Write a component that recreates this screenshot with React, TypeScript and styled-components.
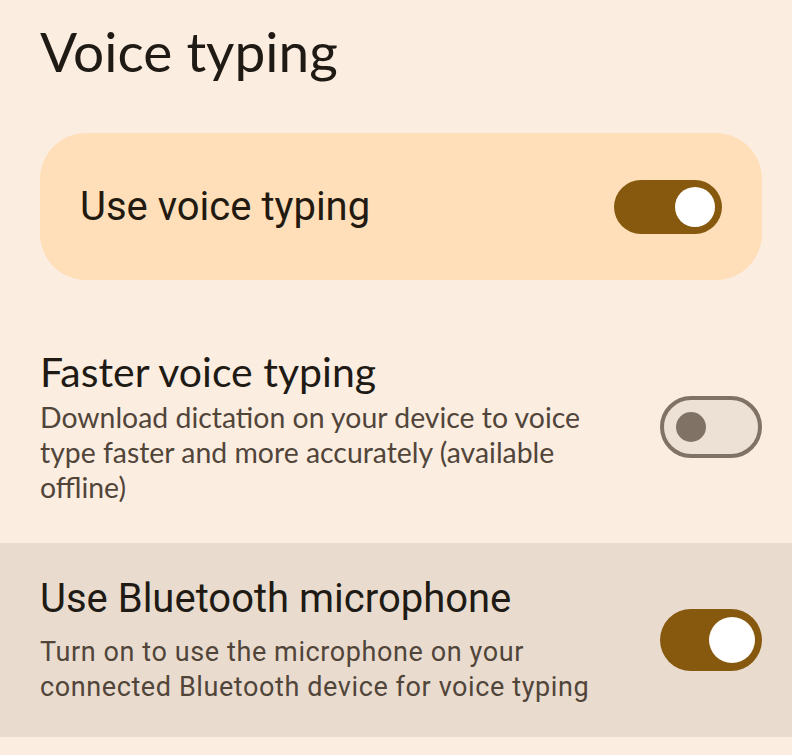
import React from 'react';
import styled, { createGlobalStyle } from 'styled-components';

const GlobalStyle = createGlobalStyle`
  html, body {
    margin: 0;
    padding: 0;
    background: #fcede1;
  }
  body {
    font-family: Roboto, "Noto Sans", sans-serif;
    color: #201a14;
  }
`;

const Page = styled.div`
  width: 792px;
  height: 755px;
  overflow: hidden;
  background: #fcede1;
  display: flex;
  flex-direction: column;
`;

const Heading = styled.h1`
  margin: 0;
  padding: 18px 40px 0;
  height: 115px;
  box-sizing: border-box;
  font-family: Lato, "Open Sans", sans-serif;
  font-weight: 400;
  font-size: 55px;
  color: #201a14;
`;

const MainCard = styled.div`
  margin: 18px 30px 0 40px;
  height: 147px;
  border-radius: 46px;
  background: #ffdfba;
  display: flex;
  align-items: center;
  justify-content: space-between;
  padding: 0 40px;
`;

const MainLabel = styled.div`
  font-family: Roboto, sans-serif;
  font-size: 40px;
  color: #221a10;
`;

const Row = styled.div<{ $shaded?: boolean; $height: number; $shift: number }>`
  box-sizing: border-box;
  height: ${(p) => p.$height}px;
  display: flex;
  align-items: center;
  justify-content: space-between;
  padding: ${(p) => p.$shift}px 30px 0 40px;
  background: ${(p) => (p.$shaded ? '#e9dccf' : 'transparent')};
`;

const TextCol = styled.div<{ $gap: number }>`
  display: flex;
  flex-direction: column;
  max-width: 575px;
  gap: ${(p) => p.$gap}px;
`;

const Title = styled.div<{ $round?: boolean }>`
  font-family: ${(p) => (p.$round ? 'Lato, "Open Sans", sans-serif' : 'Roboto, sans-serif')};
  font-size: ${(p) => (p.$round ? 41 : 40)}px;
  line-height: 48px;
  color: #201a14;
`;

const Summary = styled.div<{ $round?: boolean }>`
  font-family: ${(p) => (p.$round ? 'Lato, "Open Sans", sans-serif' : 'Roboto, sans-serif')};
  font-size: ${(p) => (p.$round ? 28.4 : 27)}px;
  letter-spacing: ${(p) => (p.$round ? 0 : 0.6)}px;
  line-height: 35px;
  color: #51453a;
`;

const Track = styled.div<{ $on: boolean; $w: number; $h: number }>`
  flex: none;
  box-sizing: border-box;
  width: ${(p) => p.$w}px;
  height: ${(p) => p.$h}px;
  border-radius: ${(p) => p.$h / 2}px;
  background: ${(p) => (p.$on ? '#87590f' : '#ede0d4')};
  border: ${(p) => (p.$on ? 'none' : '4px solid #807366')};
  display: flex;
  align-items: center;
  justify-content: ${(p) => (p.$on ? 'flex-end' : 'flex-start')};
  padding: 0 ${(p) => (p.$on ? 7 : 12)}px;
`;

const Thumb = styled.div<{ $on: boolean; $size: number }>`
  width: ${(p) => p.$size}px;
  height: ${(p) => p.$size}px;
  border-radius: 50%;
  background: ${(p) => (p.$on ? '#ffffff' : '#807366')};
`;

const Switch: React.FC<{ on: boolean; w: number; h: number; thumb: number }> = ({ on, w, h, thumb }) => (
  <Track $on={on} $w={w} $h={h}>
    <Thumb $on={on} $size={thumb} />
  </Track>
);

const App: React.FC = () => (
  <Page>
    <GlobalStyle />
    <Heading>Voice typing</Heading>
    <MainCard>
      <MainLabel>Use voice typing</MainLabel>
      <Switch on w={108} h={54} thumb={40} />
    </MainCard>
    <Row $height={263} $shift={30}>
      <TextCol $gap={4}>
        <Title $round>Faster voice typing</Title>
        <Summary $round>
          Download dictation on your device to voice type faster and more accurately (available offline)
        </Summary>
      </TextCol>
      <Switch on={false} w={102} h={62} thumb={30} />
    </Row>
    <Row $shaded $height={194} $shift={0}>
      <TextCol $gap={12}>
        <Title>Use Bluetooth microphone</Title>
        <Summary>Turn on to use the microphone on your connected Bluetooth device for voice typing</Summary>
      </TextCol>
      <Switch on w={102} h={62} thumb={46} />
    </Row>
  </Page>
);

export default App;
